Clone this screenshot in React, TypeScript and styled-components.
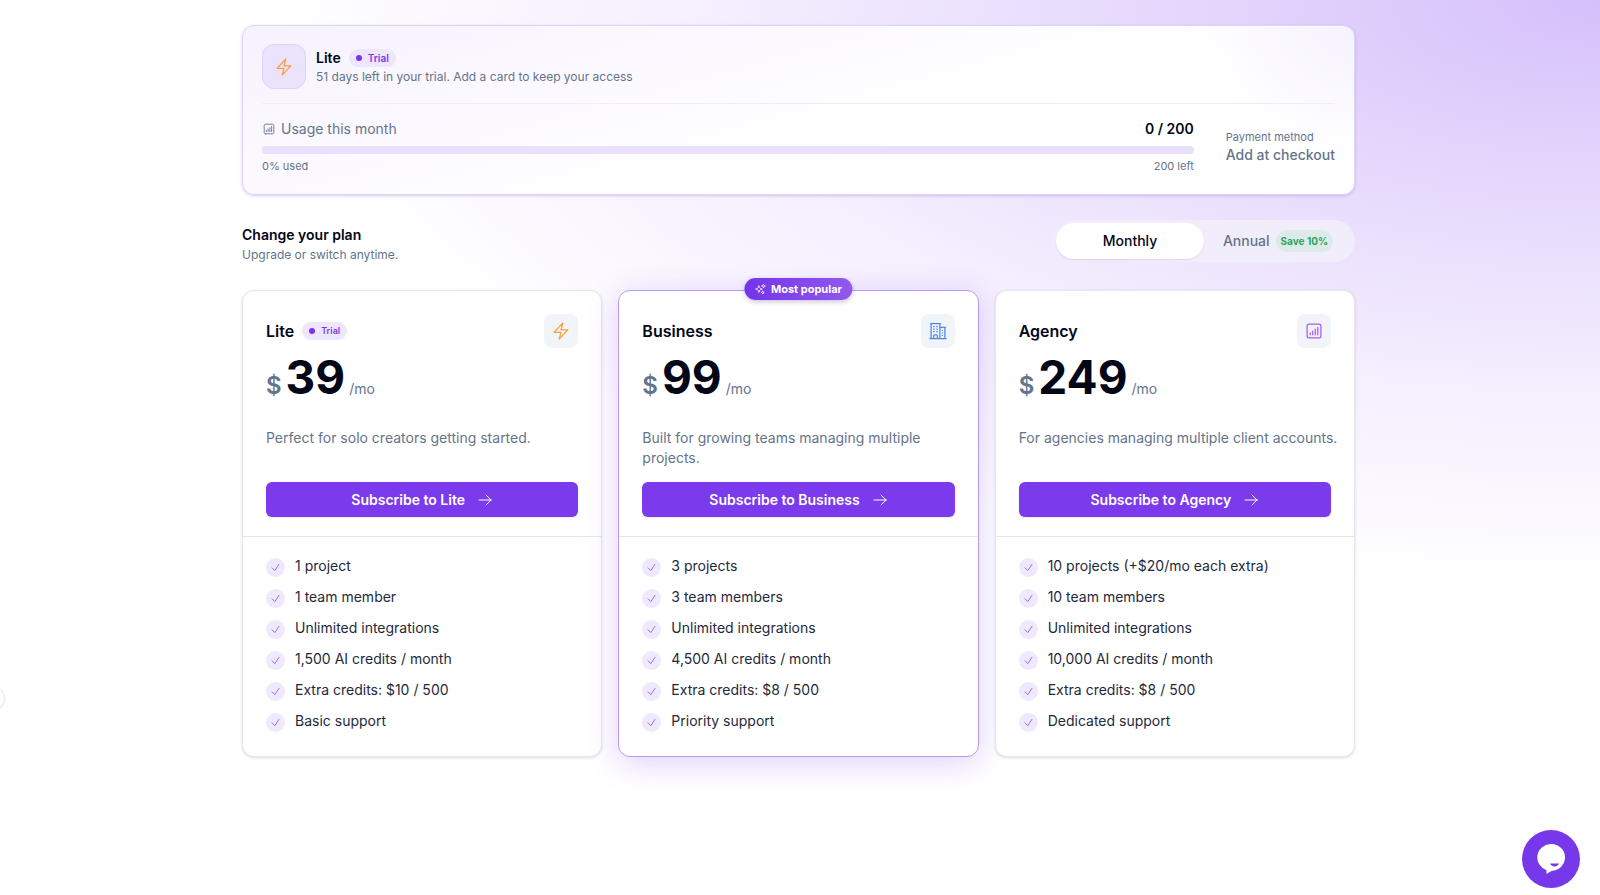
import React, { useState } from "react";
import styled, { createGlobalStyle, css } from "styled-components";

const GlobalStyle = createGlobalStyle`
  *, *::before, *::after { box-sizing: border-box; }
  body {
    margin: 0;
    background: #ffffff;
    color: #020617;
    font-family: Inter, "Liberation Sans", sans-serif;
    font-size: 14px;
    line-height: 20px;
  }
  h1, h2, h3, p, ul { margin: 0; padding: 0; }
  button { font: inherit; border: 0; cursor: pointer; }
`;

const Page = styled.div`
  position: relative;
  min-height: 100vh;
  overflow: hidden;
  padding: 25px 27px 64px 24px;
  background:
    radial-gradient(ellipse 84% 66% at 100% 0%, rgba(134, 70, 243, 0.34) 0%, rgba(134, 70, 243, 0.2) 35%, rgba(134, 70, 243, 0.09) 65%, rgba(134, 70, 243, 0) 100%),
    #ffffff;
`;

const Container = styled.main`
  max-width: 1113px;
  margin: 0 auto;
`;

const Summary = styled.section`
  padding: 18px 19px 20px;
  border: 1px solid #ddd3fb;
  border-radius: 12px;
  background:
    radial-gradient(ellipse 14% 80% at 100% 0%, #f6f2fe, rgba(255, 255, 255, 0)),
    linear-gradient(165deg, #f6f2fe 0%, #fcfaff 35%, #ffffff 65%);
  box-shadow: 0 1px 3px rgba(91, 60, 190, 0.25);
`;

const PlanRow = styled.div`
  display: flex;
  align-items: center;
  gap: 10px;
  padding-bottom: 14px;
  border-bottom: 1px solid #efebf7;
`;

const PlanTile = styled.div`
  display: grid;
  place-items: center;
  width: 44px;
  height: 45px;
  border: 1px solid #ddd2fa;
  border-radius: 12px;
  background: #ebe3fc;
  color: #f9a13c;
`;

const NameLine = styled.div`
  display: flex;
  align-items: center;
  gap: 8px;
`;

const PlanName = styled.h2`
  font-size: 14px;
  line-height: 20px;
  font-weight: 600;
`;

const Badge = styled.span`
  display: inline-flex;
  align-items: center;
  gap: 6px;
  height: 18px;
  padding: 0 7px;
  border-radius: 9px;
  background: #ede6fd;
  color: #7c3aed;
  font-size: ${(p: { $small?: boolean }) => (p.$small ? 9 : 10)}px;
  line-height: 16px;
  font-weight: 600;

  &::before {
    content: "";
    width: 6px;
    height: 6px;
    border-radius: 50%;
    background: #7c2ff5;
  }
`;

const Muted = styled.p`
  color: #64748b;
  font-size: 12px;
  line-height: 18px;
`;

const UsageRow = styled.div`
  display: flex;
  align-items: center;
  gap: 32px;
  padding-top: 15px;
`;

const Usage = styled.div`
  flex: 1;
`;

const Between = styled.div`
  display: flex;
  align-items: center;
  justify-content: space-between;
`;

const UsageLabel = styled.span`
  display: flex;
  align-items: center;
  gap: 5px;
  color: #64748b;
`;

const UsageCount = styled.span`
  font-weight: 600;
`;

const Track = styled.div`
  height: 8px;
  margin: 7px 0 4px;
  overflow: hidden;
  border-radius: 4px;
  background: #e9e1fb;
`;

const Fill = styled.div`
  height: 100%;
  background: #7c3aed;
`;

const Small = styled.span`
  display: block;
  color: #64748b;
  font-size: 11px;
  line-height: 16px;
`;

const PaymentValue = styled.span`
  display: block;
  color: #64748b;
  font-weight: 500;
`;

const ChangeRow = styled.header`
  display: flex;
  align-items: flex-start;
  justify-content: space-between;
  margin: 25px 0 26px;
`;

const ChangeText = styled.div`
  display: grid;
  gap: 1px;
  padding-top: 5px;
`;

const Toggle = styled.div`
  display: flex;
  padding: 3px;
  border-radius: 21px;
  background: #f1edfb;
`;

const ToggleButton = styled.button<{ $active: boolean }>`
  display: flex;
  align-items: center;
  justify-content: center;
  gap: 6px;
  width: 148px;
  height: 36px;
  border-radius: 18px;
  background: transparent;
  color: #64748b;
  font-weight: 500;
  ${(p) =>
    p.$active &&
    css`
      background: #ffffff;
      color: #020617;
      box-shadow: 0 1px 2px rgba(15, 23, 42, 0.1);
    `}
`;

const Save = styled.span`
  padding: 3px 5px;
  border-radius: 11px;
  background: #dcebea;
  color: #2fa35c;
  font-size: 10px;
  line-height: 16px;
  font-weight: 700;
`;

const Plans = styled.div`
  display: grid;
  grid-template-columns: repeat(3, minmax(0, 1fr));
  gap: 16px;

  @media (max-width: 860px) {
    grid-template-columns: 1fr;
  }
`;

const Card = styled.article<{ $popular?: boolean }>`
  position: relative;
  border: 1px solid ${(p) => (p.$popular ? "#b79af6" : "#e8e6ef")};
  border-radius: 12px;
  background: #ffffff;
  box-shadow: ${(p) =>
    p.$popular
      ? "0 6px 32px rgba(124, 58, 237, 0.24)"
      : "0 1px 3px rgba(15, 23, 42, 0.14)"};
`;

const Popular = styled.span`
  position: absolute;
  top: -13px;
  left: 50%;
  display: flex;
  align-items: center;
  gap: 4px;
  height: 22px;
  padding: 0 10px;
  border-radius: 11px;
  transform: translateX(-50%);
  background: linear-gradient(90deg, #7434e8, #9259f0);
  box-shadow: 0 2px 5px rgba(60, 30, 120, 0.25);
  color: #ffffff;
  font-size: 11px;
  line-height: 16px;
  font-weight: 700;
  white-space: nowrap;
`;

const CardTop = styled.div`
  padding: 23px 23px 19px;
  border-bottom: 1px solid #e6e5ec;
`;

const CardTitle = styled.h3`
  font-size: 16px;
  line-height: 24px;
  font-weight: 600;
`;

const CardTile = styled.div<{ $color: string }>`
  display: grid;
  place-items: center;
  width: 34px;
  height: 34px;
  border-radius: 8px;
  background: #f1f5f9;
  color: ${(p) => p.$color};
`;

const Price = styled.div`
  display: flex;
  align-items: baseline;
  gap: 4px;
  margin: 5px 0 26px;
  color: #64748b;
`;

const Currency = styled.span`
  font-size: 24px;
  line-height: 32px;
  font-weight: 600;
`;

const Amount = styled.span`
  color: #020617;
  font-size: 46px;
  line-height: 48px;
  font-weight: 700;
`;

const Description = styled.p`
  min-height: 40px;
  margin: 0 -12px 14px 0;
  color: #64748b;
`;

const Subscribe = styled.button`
  display: flex;
  align-items: center;
  justify-content: center;
  gap: 12px;
  width: 100%;
  height: 35px;
  border-radius: 6px;
  background: #7c3aed;
  box-shadow: 0 1px 2px rgba(15, 23, 42, 0.1);
  color: #ffffff;
  font-weight: 600;
`;

const Features = styled.ul`
  display: flex;
  flex-direction: column;
  gap: 10px;
  padding: 19px 23px 24px;
  list-style: none;
`;

const Feature = styled.li`
  display: flex;
  gap: 10px;
  color: #1e293b;
`;

const CheckDot = styled.span`
  display: grid;
  place-items: center;
  flex: none;
  width: 19px;
  height: 19px;
  margin-top: 2px;
  border-radius: 50%;
  background: #efe9fd;
  color: #9361f2;
`;

const ChatButton = styled.button`
  position: fixed;
  right: 20px;
  bottom: 7px;
  display: grid;
  place-items: center;
  width: 58px;
  height: 58px;
  padding: 0;
  border-radius: 50%;
  background: #7638ea;
`;

const EdgeHandle = styled.button`
  position: fixed;
  left: -20px;
  bottom: 184px;
  width: 25px;
  height: 25px;
  padding: 0;
  border: 1px solid #e5e7eb;
  border-radius: 50%;
  background: #ffffff;
  box-shadow: 0 1px 2px rgba(15, 23, 42, 0.05);
`;

type IconProps = { size: number; stroke?: number; d: string };

const Icon = ({ size, stroke = 1.5, d }: IconProps) => (
  <svg width={size} height={size} viewBox="0 0 24 24" fill="none" stroke="currentColor" strokeWidth={stroke} strokeLinecap="round" strokeLinejoin="round" aria-hidden="true">
    <path d={d} />
  </svg>
);

const icons = {
  bolt: "m3.75 13.5 10.5-11.25L12 10.5h8.25L9.75 21.75 12 13.5H3.75Z",
  chart:
    "M7.5 14.25v2.25m3-4.5v4.5m3-6.75v6.75m3-9v9M6 20.25h12A2.25 2.25 0 0 0 20.25 18V6A2.25 2.25 0 0 0 18 3.75H6A2.25 2.25 0 0 0 3.75 6v12A2.25 2.25 0 0 0 6 20.25Z",
  building:
    "M2.25 21h19.5m-18-18v18m10.5-18v18m6-13.5V21M6.75 6.75h.75m-.75 3h.75m-.75 3h.75m3-6h.75m-.75 3h.75m-.75 3h.75M6.75 21v-3.375c0-.621.504-1.125 1.125-1.125h2.25c.621 0 1.125.504 1.125 1.125V21M3 3h12m-.75 4.5H21m-3.75 3.75h.008v.008h-.008v-.008Zm0 3h.008v.008h-.008v-.008Zm0 3h.008v.008h-.008v-.008Z",
  sparkles:
    "M9.813 15.904 9 18.75l-.813-2.846a4.5 4.5 0 0 0-3.09-3.09L2.25 12l2.846-.813a4.5 4.5 0 0 0 3.09-3.09L9 5.25l.813 2.846a4.5 4.5 0 0 0 3.09 3.09L15.75 12l-2.846.813a4.5 4.5 0 0 0-3.09 3.09ZM18.259 8.715 18 9.75l-.259-1.035a3.375 3.375 0 0 0-2.455-2.456L14.25 6l1.036-.259a3.375 3.375 0 0 0 2.455-2.456L18 2.25l.259 1.035a3.375 3.375 0 0 0 2.456 2.456L21.75 6l-1.035.259a3.375 3.375 0 0 0-2.456 2.456ZM16.894 20.567 16.5 21.75l-.394-1.183a2.25 2.25 0 0 0-1.423-1.423L13.5 18.75l1.183-.394a2.25 2.25 0 0 0 1.423-1.423l.394-1.183.394 1.183a2.25 2.25 0 0 0 1.423 1.423l1.183.394-1.183.394a2.25 2.25 0 0 0-1.423 1.423Z",
  arrow: "M13.5 4.5 21 12m0 0-7.5 7.5M21 12H3",
  check: "m4.5 12.75 6 6 9-13.5",
};

const plans = [
  {
    name: "Lite", price: 39, trial: true, color: "#f9a13c", icon: icons.bolt,
    text: "Perfect for solo creators getting started.",
    features: ["1 project", "1 team member", "Unlimited integrations", "1,500 AI credits / month", "Extra credits: $10 / 500", "Basic support"],
  },
  {
    name: "Business", price: 99, popular: true, color: "#4f86f0", icon: icons.building,
    text: "Built for growing teams managing multiple projects.",
    features: ["3 projects", "3 team members", "Unlimited integrations", "4,500 AI credits / month", "Extra credits: $8 / 500", "Priority support"],
  },
  {
    name: "Agency", price: 249, color: "#a85cf5", icon: icons.chart,
    text: "For agencies managing multiple client accounts.",
    features: ["10 projects (+$20/mo each extra)", "10 team members", "Unlimited integrations", "10,000 AI credits / month", "Extra credits: $8 / 500", "Dedicated support"],
  },
];

export default function App() {
  const [annual, setAnnual] = useState(false);
  const used = 0;

  return (
    <Page>
      <GlobalStyle />
      <Container>
        <Summary>
          <PlanRow>
            <PlanTile><Icon size={20} d={icons.bolt} /></PlanTile>
            <div>
              <NameLine>
                <PlanName>Lite</PlanName>
                <Badge>Trial</Badge>
              </NameLine>
              <Muted>51 days left in your trial. Add a card to keep your access</Muted>
            </div>
          </PlanRow>
          <UsageRow>
            <Usage>
              <Between>
                <UsageLabel><Icon size={14} d={icons.chart} />Usage this month</UsageLabel>
                <UsageCount>0 / 200</UsageCount>
              </Between>
              <Track role="progressbar" aria-label="Usage this month" aria-valuenow={used} aria-valuemin={0} aria-valuemax={200}>
                <Fill style={{ width: `${used / 2}%` }} />
              </Track>
              <Between>
                <Small>0% used</Small>
                <Small>200 left</Small>
              </Between>
            </Usage>
            <div>
              <Small>Payment method</Small>
              <PaymentValue>Add at checkout</PaymentValue>
            </div>
          </UsageRow>
        </Summary>

        <ChangeRow>
          <ChangeText>
            <PlanName>Change your plan</PlanName>
            <Muted>Upgrade or switch anytime.</Muted>
          </ChangeText>
          <Toggle>
            <ToggleButton type="button" $active={!annual} aria-pressed={!annual} onClick={() => setAnnual(false)}>Monthly</ToggleButton>
            <ToggleButton type="button" $active={annual} aria-pressed={annual} onClick={() => setAnnual(true)}>
              Annual<Save>Save 10%</Save>
            </ToggleButton>
          </Toggle>
        </ChangeRow>

        <Plans>
          {plans.map((plan) => (
            <Card key={plan.name} $popular={plan.popular}>
              {plan.popular && <Popular><Icon size={12} d={icons.sparkles} />Most popular</Popular>}
              <CardTop>
                <Between>
                  <NameLine>
                    <CardTitle>{plan.name}</CardTitle>
                    {plan.trial && <Badge $small>Trial</Badge>}
                  </NameLine>
                  <CardTile $color={plan.color}><Icon size={20} d={plan.icon} /></CardTile>
                </Between>
                <Price>
                  <Currency>$</Currency>
                  <Amount>{plan.price}</Amount>
                  <span>/mo</span>
                </Price>
                <Description>{plan.text}</Description>
                <Subscribe type="button">Subscribe to {plan.name}<Icon size={16} d={icons.arrow} /></Subscribe>
              </CardTop>
              <Features>
                {plan.features.map((feature) => (
                  <Feature key={feature}><CheckDot><Icon size={11} stroke={2} d={icons.check} /></CheckDot>{feature}</Feature>
                ))}
              </Features>
            </Card>
          ))}
        </Plans>
      </Container>
      <EdgeHandle type="button" aria-label="Expand sidebar" />
      <ChatButton type="button" aria-label="Open chat">
        <svg width="28" height="30" viewBox="0 0 28 30" aria-hidden="true">
          <path d="M14 0a14 13.500 0 0 0-4.500 26.200V30l5-3A13.800 13.500 0 0 0 14 0Z" fill="#fff" />
          <path d="M13 19.500h9c-1.500 4-7.500 4-9 0Z" fill="#7638ea" />
        </svg>
      </ChatButton>
    </Page>
  );
}
